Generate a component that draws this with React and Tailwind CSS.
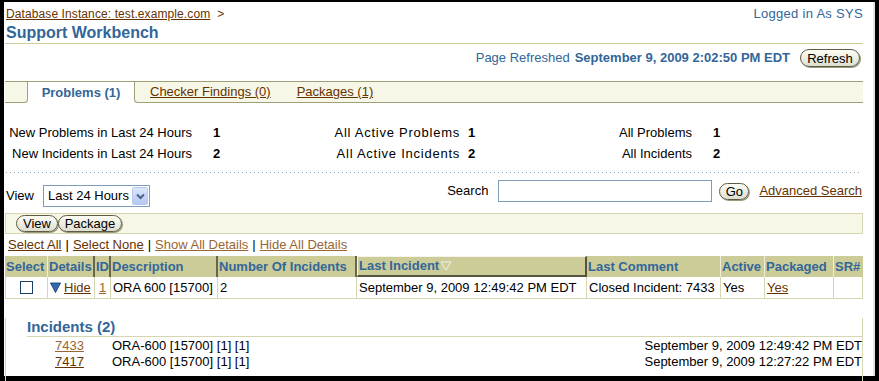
import React from "react";

const blue = "text-[#336699]";
const link = "text-[#663300] underline";
const linkLight = "text-[#996633] underline";
const pill =
  "rounded-full border border-[#5c5c44] bg-[linear-gradient(#fdfdf5,#deded0)] text-black leading-none flex items-center justify-center shadow-[1px_1px_0_#9a9a80]";

const stats = [
  ["New Problems in Last 24 Hours", "1", "All Active Problems", "1", "All Problems", "1"],
  ["New Incidents in Last 24 Hours", "2", "All Active Incidents", "2", "All Incidents", "2"],
];

const incidents = [
  { id: "7433", visited: true, desc: "ORA-600 [15700] [1] [1]", when: "September 9, 2009 12:49:42 PM EDT" },
  { id: "7417", visited: false, desc: "ORA-600 [15700] [1] [1]", when: "September 9, 2009 12:27:22 PM EDT" },
];

function Pill({ label, className }) {
  return <button className={`${pill} ${className}`}>{label}</button>;
}

function HeaderCell({ label, w, kind, children }) {
  // kind: light separator, dark (sortable) separator, or sorted column
  const edge =
    kind === "sorted"
      ? "border-r-2 border-b-2 border-r-[#55553f] border-b-[#55553f] border-t border-l border-t-[#f4f4e8] border-l-[#f4f4e8]"
      : kind === "dark"
      ? "border-r-2 border-[#66664e]"
      : kind === "none"
      ? ""
      : "border-r border-[#eeeedd]";
  return (
    <div className={`${w} h-full flex items-center pl-[1px] font-bold ${blue} whitespace-nowrap overflow-hidden ${edge}`}>
      {label}
      {children}
    </div>
  );
}

function Cell({ w, children, className = "", last }) {
  return (
    <div className={`${w} h-full flex items-center pl-[2px] whitespace-nowrap ${last ? "" : "border-r border-[#d6d6b0]"} ${className}`}>
      {children}
    </div>
  );
}

export default function App() {
  return (
    <div
      className="w-[879px] h-[381px] bg-black pt-[2px] pl-[4px] text-[13px] text-black"
      style={{ fontFamily: '"Liberation Sans", Arial, sans-serif' }}
    >
      <div className="w-[871px] h-[374px] bg-white border-r-2 border-[#e4e4e4] pl-[1px] pr-[10px]">
        {/* breadcrumb */}
        <div className="pt-[4px] h-[20px] leading-[16px] flex justify-between">
          <div className="pl-[1px] text-[12px] tracking-[0.1px]">
            <span className={link}>Database Instance: test.example.com</span>
            <span className="text-[#663300] ml-[7px]">&gt;</span>
          </div>
          <span className={`${blue} tracking-[0.3px]`}>Logged in As SYS</span>
        </div>

        <div className={`h-[22px] border-b border-[#cccc99] pt-[1px] pl-[1px] leading-[20px] text-[16px] font-bold ${blue}`}>
          Support Workbench
        </div>

        {/* refreshed */}
        <div className="mt-[5px] h-[18px] flex items-center justify-end pr-[3px]">
          <span className={blue}>Page Refreshed</span>
          <span className={`${blue} font-bold ml-[5px]`}>September 9, 2009 2:02:50 PM EDT</span>
          <Pill label="Refresh" className="ml-[10px] w-[60px] h-[18px]" />
        </div>

        {/* tabs */}
        <div className="mt-[14px] h-[22px] border-t border-[#a0a078] bg-[#f7f7e7] flex">
          <div className="w-[23px] h-full border-b border-r border-[#a0a078] rounded-br-[4px]" />
          <div className={`w-[106px] h-full bg-white flex items-center justify-center font-bold ${blue}`}>
            Problems (1)
          </div>
          <div className="flex-1 h-full border-b border-l border-[#a0a078] rounded-bl-[4px] flex items-center pl-[15px] gap-[26px]">
            <span className={link}>Checker Findings (0)</span>
            <span className={link}>Packages (1)</span>
          </div>
        </div>

        {/* summary */}
        <div className="mt-[19px]">
          {stats.map((r) => (
            <div key={r[0]} className="flex h-[21px] leading-[21px]">
              <div className="w-[187px] text-right whitespace-nowrap">{r[0]}</div>
              <div className="w-[50px] pl-[21px] font-bold">{r[1]}</div>
              <div className="w-[218px] text-right tracking-[0.75px]">{r[2]}</div>
              <div className="w-[100px] pl-[8px] font-bold">{r[3]}</div>
              <div className="w-[132px] text-right">{r[4]}</div>
              <div className="pl-[21px] font-bold">{r[5]}</div>
            </div>
          ))}
        </div>

        <div className="mt-[8px] ml-[1px] h-px w-[856px] bg-[repeating-linear-gradient(90deg,#8fa3b8_0_1px,transparent_1px_4px)]" />

        {/* view / search */}
        <div className="flex justify-between items-start h-[34px]">
          <div className="mt-[12px] flex items-center pl-[1px]">
            <span className="w-[37px]">View</span>
            <div className="w-[107px] h-[22px] border border-[#7f9db9] flex items-center justify-between pl-[4px] pr-[1px]">
              <span>Last 24 Hours</span>
              <div className="w-[16px] h-[18px] bg-[linear-gradient(#dce6fd,#b4c8f5)] border border-[#b8c9ee] rounded-[2px] flex items-center justify-center">
                <svg width="9" height="7" viewBox="0 0 9 7">
                  <path d="M1 1.5 L4.5 5 L8 1.5" fill="none" stroke="#4d6185" strokeWidth="2" />
                </svg>
              </div>
            </div>
          </div>
          <div className="mt-[7px] flex items-center h-[22px]">
            <span>Search</span>
            <div className="ml-[10px] w-[214px] h-[22px] border border-[#7f9db9] bg-white" />
            <Pill label="Go" className="ml-[7px] w-[30px] h-[17px]" />
            <span className={`${link} ml-[10px] mr-[1px]`}>Advanced Search</span>
          </div>
        </div>

        {/* toolbar */}
        <div className="mt-[6px] h-[21px] border border-[#d6d6b0] bg-[#f7f7e7] flex items-center pl-[10px]">
          <Pill label="View" className="w-[42px] h-[17px]" />
          <Pill label="Package" className="w-[64px] h-[17px]" />
        </div>

        {/* select links */}
        <div className="h-[22px] flex items-center pl-[3px] gap-[4px]">
          <span className={link}>Select All</span>
          <span>|</span>
          <span className={link}>Select None</span>
          <span>|</span>
          <span className={linkLight}>Show All Details</span>
          <span>|</span>
          <span className={linkLight}>Hide All Details</span>
        </div>

        {/* table header */}
        <div className="h-[21px] bg-[#cccc99] flex">
          <HeaderCell label="Select" w="w-[43px]" />
          <HeaderCell label="Details" w="w-[47px]" kind="dark" />
          <HeaderCell label="ID" w="w-[16px]" kind="dark" />
          <HeaderCell label="Description" w="w-[107px]" kind="dark" />
          <HeaderCell label="Number Of Incidents" w="w-[139px]" kind="dark" />
          <HeaderCell label="Last Incident" w="w-[230px]" kind="sorted">
            <svg width="12" height="10" viewBox="0 0 12 10" className="ml-[1px]">
              <path d="M1 1 L11 1 L6 9 Z" fill="none" stroke="#f2f2ea" strokeWidth="1" />
            </svg>
          </HeaderCell>
          <HeaderCell label="Last Comment" w="w-[134px]" />
          <HeaderCell label="Active" w="w-[44px]" />
          <HeaderCell label="Packaged" w="w-[69px]" />
          <HeaderCell label="SR#" w="flex-1" kind="none" />
        </div>

        {/* data row */}
        <div className="h-[22px] flex border-x border-b border-[#d6d6b0]">
          <Cell w="w-[42px]" className="justify-center !pl-0">
            <div className="w-[13px] h-[13px] border border-[#1c3f66] bg-white" />
          </Cell>
          <Cell w="w-[47px]">
            <svg width="11" height="11" viewBox="0 0 11 11" className="mr-[3px]">
              <path d="M0.5 1 L10.5 1 L5.5 10.5 Z" fill="#3366aa" stroke="#1f4d80" strokeWidth="1" />
            </svg>
            <span className={link}>Hide</span>
          </Cell>
          <Cell w="w-[16px]" className="justify-center !pl-0">
            <span className={linkLight}>1</span>
          </Cell>
          <Cell w="w-[107px]">ORA 600 [15700]</Cell>
          <Cell w="w-[139px]">2</Cell>
          <Cell w="w-[230px]">September 9, 2009 12:49:42 PM EDT</Cell>
          <Cell w="w-[134px]">Closed Incident: 7433</Cell>
          <Cell w="w-[44px]">Yes</Cell>
          <Cell w="w-[69px]">
            <span className={link}>Yes</span>
          </Cell>
          <Cell w="flex-1" last />
        </div>

        {/* incidents detail */}
        <div className="h-[74px] border-x border-b border-[#d6d6b0] pl-[21px]">
          <div className={`mt-[19px] h-[19px] border-b border-[#d6d6b0] leading-[18px] text-[15px] font-bold ${blue}`}>
            Incidents (2)
          </div>
          <div className="pt-[1px]">
            {incidents.map((it) => (
              <div key={it.id} className="flex h-[16px] leading-[16px]">
                <div className="w-[85px] pl-[28px]">
                  <span className={it.visited ? linkLight : link}>{it.id}</span>
                </div>
                <div className="flex-1">{it.desc}</div>
                <div className="text-right">{it.when}</div>
              </div>
            ))}
          </div>
        </div>
      </div>
    </div>
  );
}
